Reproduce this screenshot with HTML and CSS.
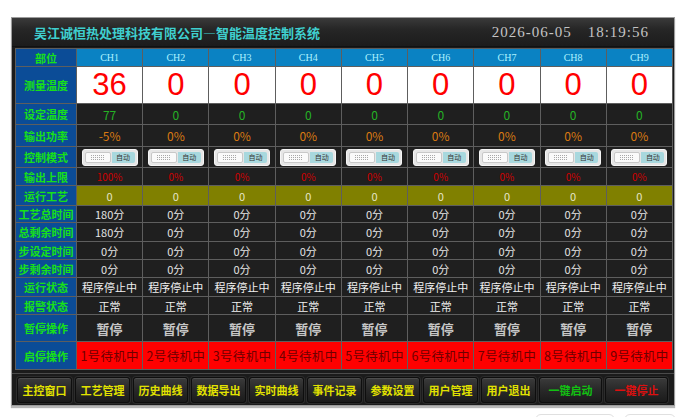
FILE: index.html
```html
<!DOCTYPE html>
<html lang="zh-CN">
<head>
    <meta charset="UTF-8">
    <meta name="viewport" content="width=device-width, initial-scale=1.0">
    <title>智能温度控制系统</title>
    <link rel="stylesheet" href="styles.css">
</head>
<body>
    <div class="frame">
        <div class="titlebar">
            <span class="title">吴江诚恒热处理科技有限公司—智能温度控制系统</span>
            <span class="clock"><span>2026-06-05</span><span>18:19:56</span></span>
        </div>

        <div class="grid" id="grid"></div>

        <div class="toolbar">
            <button>主控窗口</button>
            <button>工艺管理</button>
            <button>历史曲线</button>
            <button>数据导出</button>
            <button>实时曲线</button>
            <button>事件记录</button>
            <button>参数设置</button>
            <button>用户管理</button>
            <button>用户退出</button>
            <button class="wide start">一键启动</button>
            <button class="wide stop">一键停止</button>
        </div>
    </div>

    <div class="below"><span></span><span></span></div>

    <script>
        // one entry per row: label, row class, and the nine channel values
        const nine = v => Array(9).fill(v);
        const rows = [
            { label: '部位', cls: 'head', cells: nine('').map((_, i) => 'CH' + (i + 1)) },
            { label: '测量温度', cls: 'pv', cells: ['36'].concat(Array(8).fill('0')) },
            { label: '设定温度', cls: 'sv', cells: ['77'].concat(Array(8).fill('0')) },
            { label: '输出功率', cls: 'out', cells: ['-5%'].concat(Array(8).fill('0%')) },
            { label: '控制模式', cls: 'mode', cells: nine('switch') },
            { label: '输出上限', cls: 'limit', cells: ['100%'].concat(Array(8).fill('0%')) },
            { label: '运行工艺', cls: 'proc', cells: nine('0') },
            { label: '工艺总时间', cls: 'time', cells: ['180分'].concat(Array(8).fill('0分')) },
            { label: '总剩余时间', cls: 'time', cells: ['180分'].concat(Array(8).fill('0分')) },
            { label: '步设定时间', cls: 'time', cells: nine('0分') },
            { label: '步剩余时间', cls: 'time', cells: nine('0分') },
            { label: '运行状态', cls: 'state', cells: nine('程序停止中') },
            { label: '报警状态', cls: 'state', cells: nine('正常') },
            { label: '暂停操作', cls: 'pause', cells: nine('暂停') },
            { label: '启停操作', cls: 'run', cells: nine('').map((_, i) => (i + 1) + '号待机中') }
        ];

        const grid = document.getElementById('grid');
        rows.forEach(row => {
            const label = document.createElement('div');
            label.className = 'cell label';
            label.textContent = row.label;
            grid.appendChild(label);

            row.cells.forEach(value => {
                const cell = document.createElement('div');
                cell.className = 'cell ' + row.cls;
                if (value === 'switch') {
                    cell.innerHTML = '<span class="switch"><span class="knob"></span><span class="auto">自动</span></span>';
                } else {
                    cell.textContent = value;
                }
                grid.appendChild(cell);
            });
        });
    </script>
</body>
</html>
```

FILE: styles.css
```css
body {
    margin: 0;
    background: #fff;
    font-family: "Noto Sans CJK SC", "Liberation Sans", sans-serif;
}

.frame {
    width: 664px;
    margin: 17px 0 0 11px;
    border: 1px solid #9c9c9c;
    background: #1b1b1b;
    box-sizing: border-box;
    box-shadow: 0 2px 1px #b8b8b8;
}

.titlebar {
    height: 28px;
    display: flex;
    align-items: center;
    justify-content: space-between;
    padding: 0 25px 0 22px;
    background: linear-gradient(#3a3a3a, #262626 40%, #1c1c1c);
    border-bottom: 1px solid #111;
}

.title {
    color: #3fcfcf;
    font-size: 13px;
    font-weight: bold;
}

.clock {
    display: flex;
    gap: 16px;
    color: #c4c4c4;
    font-family: "Liberation Serif", serif;
    font-size: 15px;
    letter-spacing: 1px;
}

.grid {
    display: grid;
    grid-template-columns: 60px repeat(9, 1fr);
    grid-template-rows: 17px 36px 20px 21px 20px 17px 19px 16px 18px 17px 17px 18px 17px 26px 27px;
    gap: 1px;
    padding: 1px;
    margin: 1px 1px 0 3px;
    background: #5e5e5e;
}

.cell {
    display: flex;
    align-items: center;
    justify-content: center;
    background: #1f1f1f;
    color: #e4e4e4;
    font-size: 11px;
    white-space: nowrap;
    overflow: hidden;
}

.label {
    background: #0b4c97;
    color: #18e018;
    font-size: 11px;
    font-weight: bold;
}

.head {
    background: #0a82c3;
    color: #aef2ff;
    font-family: "Liberation Serif", serif;
    font-size: 10px;
}

.pv {
    background: #fff;
    color: #ff0000;
    font-family: "Liberation Sans", sans-serif;
    font-size: 31px;
}

.sv {
    color: #25b225;
    font-size: 12px;
}

.out {
    color: #d97a12;
    font-size: 12px;
}

.limit {
    color: #d00000;
    font-size: 10px;
}

.proc {
    background: #808000;
    color: #e6e6c8;
}

.state {
    color: #f0f0f0;
    font-size: 11px;
}

.pause {
    color: #c6c6c6;
    font-size: 13px;
    font-weight: bold;
}

.run {
    background: #ff0000;
    color: #6e0000;
    font-size: 12.5px;
    letter-spacing: 0.3px;
}

/* auto/manual switch in the control mode row */
.switch {
    width: 56px;
    height: 17px;
    box-sizing: border-box;
    display: flex;
    padding: 2px;
    gap: 1px;
    background: #e6e6e6;
    border: 1px solid #f6f6f6;
    border-radius: 3px;
}

.knob {
    width: 26px;
    border-radius: 2px;
    border: 1px solid #c8c8c8;
    box-sizing: border-box;
    background: #fafafa;
    display: flex;
    align-items: center;
    justify-content: center;
}

/* grip marks on the knob */
.knob::before {
    content: "";
    width: 14px;
    height: 5px;
    background: repeating-linear-gradient(90deg, #a8a8a8 0 1px, transparent 1px 2px);
    -webkit-mask: repeating-linear-gradient(#000 0 1px, transparent 1px 2px);
    mask: repeating-linear-gradient(#000 0 1px, transparent 1px 2px);
}

.auto {
    flex: 1;
    display: flex;
    align-items: center;
    justify-content: center;
    background: #a8d8de;
    color: #333;
    font-size: 7px;
    border-radius: 0 2px 2px 0;
}

.toolbar {
    display: flex;
    gap: 3px;
    margin-top: 3px;
    padding: 3px 0 2px 5px;
    border-top: 1px solid #4a4a4a;
}

.toolbar button {
    width: 55px;
    height: 26px;
    padding: 0;
    border: 1px solid #0e0e0e;
    border-radius: 3px;
    background: linear-gradient(#3b3b3b, #2a2a2a 45%, #1b1b1b);
    box-shadow: inset 0 1px 0 #4c4c4c, 0 0 0 1px #2c2c2c;
    color: #e2e200;
    font-family: "Noto Sans CJK SC", sans-serif;
    font-size: 11px;
    font-weight: bold;
}

.toolbar .wide {
    width: 63px;
}

.toolbar .start {
    color: #12c012;
}

.toolbar .stop {
    color: #dd1010;
}

.below {
    display: flex;
    justify-content: flex-end;
    gap: 9px;
    width: 676px;
    margin-top: 8px;
}

.below span {
    width: 78px;
    height: 20px;
    border: 1px solid #e0e0e0;
    border-radius: 6px;
}

.below span + span {
    width: 50px;
}
```
